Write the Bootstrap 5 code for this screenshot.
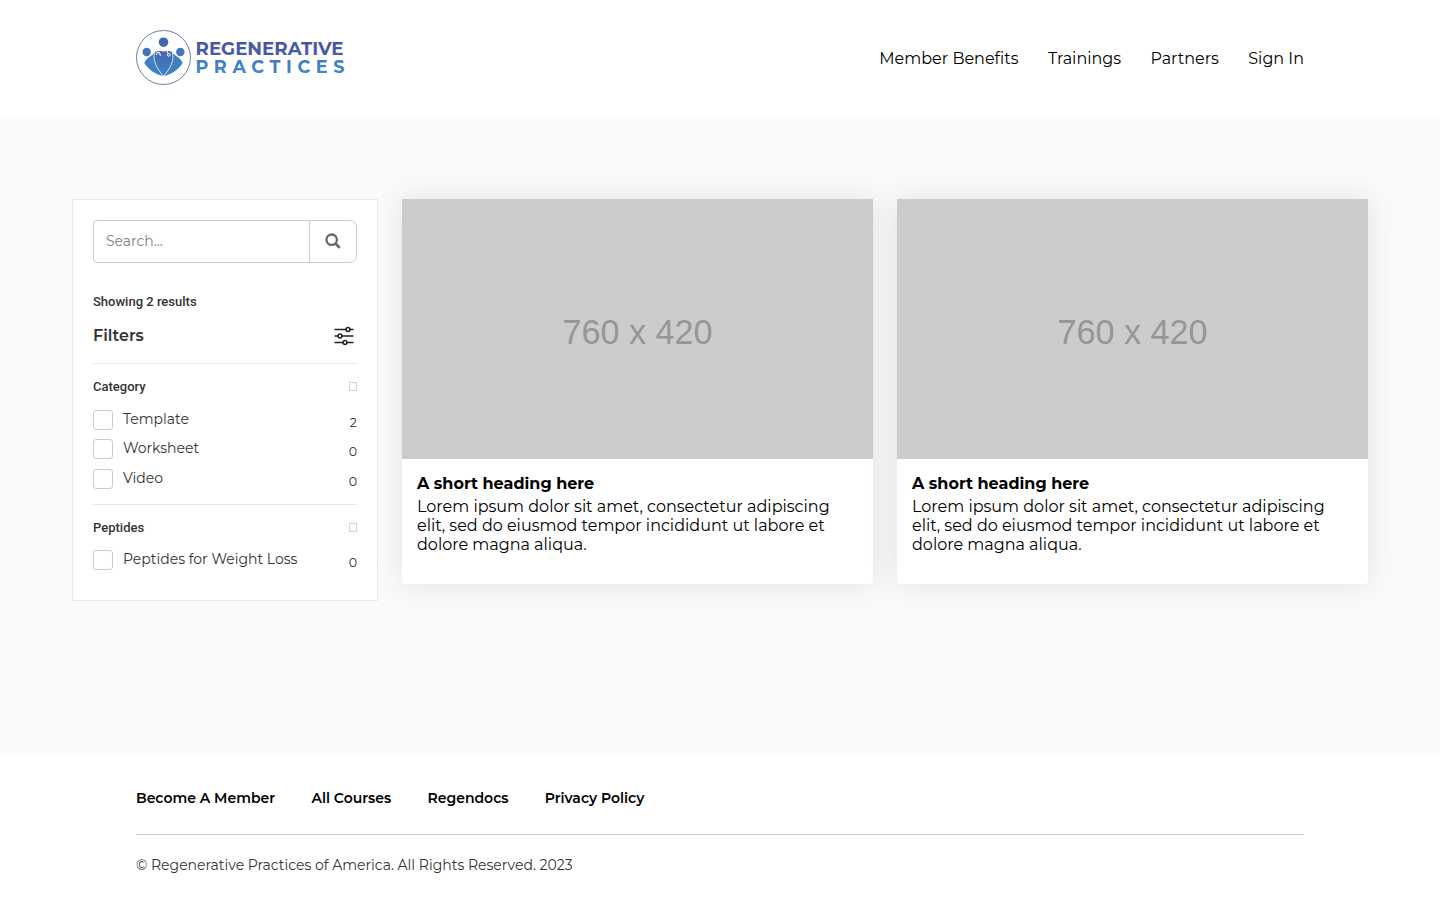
<!DOCTYPE html>
<html lang="en">
<head>
<meta charset="utf-8">
<meta name="viewport" content="width=device-width, initial-scale=1">
<title>Regenerative Practices</title>
<link href="https://cdn.jsdelivr.net/npm/bootstrap@5.3.0/dist/css/bootstrap.min.css" rel="stylesheet">
<script src="https://cdn.jsdelivr.net/npm/bootstrap@5.3.0/dist/js/bootstrap.bundle.min.js"></script>
<style>
  body { font-family: Montserrat, Inter, sans-serif; font-weight: 400; color: #000; background: #fff; }
  a { color: #000; text-decoration: none; white-space: nowrap; }
  .site-wrap { width: 1168px; max-width: 100%; margin: 0 auto; }

  .site-header { height: 119px; }
  .site-header .site-wrap { height: 115px; }
  .top-nav { gap: 29.3px; font-size: 16px; padding-top: 2px; }

  .page-main { height: 634px; padding-top: 80px; background: #fafafa; }

  .filter-panel { height: 402px; padding: 20px; background: #fff; border: 1px solid #e9e9e9; color: #333; }
  .search-box { height: 43px; margin-bottom: 30px; }
  .search-box .form-control { border: 1px solid #ccc; font-size: 14px; padding: 0 12px; border-radius: 4px 0 0 4px; }
  .search-box .form-control::placeholder { color: #7b8085; }
  .search-box .btn { width: 48px; border: 1px solid #ccc; border-radius: 0 7px 7px 0; padding: 0 0 2px; }
  .label-sm { font: 500 13px/17px Roboto, sans-serif; color: #333; }
  .filters-title { font-size: 16px; font-weight: 600; line-height: 24px; }
  .filters-head { height: 32px; margin: 10px 0 11px; padding-right: 3px; }
  .filter-rule { height: 1px; background: #e6e6e6; }
  .group-head { height: 17px; margin: 14px 0 15px; }
  .group-head.second-group { margin-bottom: 14px; }
  .glyph-box { width: 8px; height: 9px; border: 1px solid #d2d2d2; }
  .option-row { height: 20px; margin-bottom: 9.4px; font-size: 14px; line-height: 18px; }
  .option-row.last-option { margin-bottom: 15.2px; }
  .option-row .form-check-input { width: 20px; height: 20px; margin: 0 10px 0 0; border: 1px solid #ccc; border-radius: 3px; flex: none; }
  .option-count { font-size: 12.6px; padding-top: 4px; }

  .resource-card { height: 385px; background: #fff; border-radius: 4px; box-shadow: 0 0 30px rgba(0,0,0,.1); }
  .thumb { height: 260px; background: #ccc; color: #969696; font: 34.2px/1 "Liberation Sans", Arial, sans-serif; padding-top: 7px; }
  .card-text-wrap { padding: 15px 15px 0; }
  .card-text-wrap h2 { font-size: 16px; font-weight: 700; line-height: 19px; margin: 0 0 4px; }
  .card-text-wrap p { font-size: 16px; line-height: 19px; margin: 0; }

  .foot-nav { height: 81px; padding-top: 9px; font-size: 14px; font-weight: 600; gap: 36.3px; }
  .foot-line { border-top: 1px solid #ccc; }
  .copyright { font-size: 14px; line-height: 20px; padding-top: 20px; color: #333; }
</style>
</head>
<body>
<header class="site-header">
  <div class="site-wrap d-flex align-items-center justify-content-between">
    <a href="#" aria-label="Regenerative Practices">
      <svg class="d-block" width="212" height="56" viewBox="0 0 212 56">
        <defs>
          <linearGradient id="blue" x1="0" y1="0" x2="0" y2="1"><stop offset="0" stop-color="#4464ad"/><stop offset="1" stop-color="#3b86c8"/></linearGradient>
          <linearGradient id="word1" x1="0" y1="0" x2="0" y2="1"><stop offset="0" stop-color="#4a52a0"/><stop offset="1" stop-color="#465fab"/></linearGradient>
          <linearGradient id="word2" x1="0" y1="0" x2="0" y2="1"><stop offset="0" stop-color="#4275bb"/><stop offset="1" stop-color="#3f8fd0"/></linearGradient>
        </defs>
        <circle cx="27.5" cy="27.5" r="27" fill="#fff" stroke="#5b7191" stroke-width=".9"/>
        <circle cx="27.5" cy="12.2" r="4.8" fill="#4167b0"/>
        <circle cx="10.7" cy="22" r="4.2" fill="#3f75ba"/>
        <circle cx="44.3" cy="22" r="4.2" fill="#3f75ba"/>
        <path d="M19.500 21C16 27 11.500 26 8.300 33C12 39 19 44.500 27.500 46C36 44.500 43 39 46.700 33C43.500 26 39 27 35.500 21Z" fill="#3f7fc3"/>
        <path d="M18.500 23Q20.500 19 27.500 21.200Q34.500 19 36.500 23C38.500 30 34 39.500 27.500 46C21 39.500 16.500 30 18.500 23Z" fill="url(#blue)" stroke="#fff" stroke-width=".8"/>
        <path d="M20.500 25Q20.500 22.500 22.500 22Q24.300 23 24.300 26M31 21.300L31.800 23" fill="none" stroke="#fff" stroke-width="1.100"/>
        <circle cx="32.800" cy="24.800" r="1.400" fill="none" stroke="#fff" stroke-width="1"/>
        <g font-family="Montserrat, Inter, sans-serif" font-weight="700" font-size="17.600">
          <text x="59.500" y="24.800" textLength="148" lengthAdjust="spacingAndGlyphs" fill="url(#word1)">REGENERATIVE</text>
          <text x="59.500" y="43" textLength="149" fill="url(#word2)">PRACTICES</text>
        </g>
      </svg>
    </a>
    <nav class="top-nav d-flex">
      <a href="#">Member Benefits</a><a href="#">Trainings</a><a href="#">Partners</a><a href="#">Sign In</a>
    </nav>
  </div>
</header>

<main class="page-main">
  <div class="container">
    <div class="row">
      <aside class="col-3">
        <div class="filter-panel">
          <div class="search-box input-group">
            <input class="form-control" type="text" placeholder="Search..." aria-label="Search">
            <button class="btn d-flex align-items-center justify-content-center" type="button" aria-label="Search">
              <svg width="16" height="16" viewBox="0 0 16 16" fill="none" stroke="#666"><circle cx="6.700" cy="6.700" r="5.200" stroke-width="2.300"/><path d="M10.600 10.600L14.700 14.700" stroke-width="2.700"/></svg>
            </button>
          </div>
          <div class="label-sm">Showing 2 results</div>
          <div class="filters-head d-flex align-items-center justify-content-between">
            <span class="filters-title">Filters</span>
            <svg width="20" height="20" viewBox="0 0 20 20" fill="#fff" stroke="#222" stroke-width="1.500" stroke-linecap="round"><path d="M1 3.500H19M1 10H19M1 16.500H19"/><circle cx="14" cy="3.500" r="1.900"/><circle cx="6" cy="10" r="1.900"/><circle cx="11" cy="16.500" r="1.900"/></svg>
          </div>
          <div class="filter-rule"></div>
          <div class="group-head label-sm d-flex justify-content-between align-items-center"><span>Category</span><span class="glyph-box"></span></div>
          <div class="option-row d-flex"><input class="form-check-input" type="checkbox"><span>Template</span><span class="option-count ms-auto">2</span></div>
          <div class="option-row d-flex"><input class="form-check-input" type="checkbox"><span>Worksheet</span><span class="option-count ms-auto">0</span></div>
          <div class="option-row last-option d-flex"><input class="form-check-input" type="checkbox"><span>Video</span><span class="option-count ms-auto">0</span></div>
          <div class="filter-rule"></div>
          <div class="group-head second-group label-sm d-flex justify-content-between align-items-center"><span>Peptides</span><span class="glyph-box"></span></div>
          <div class="option-row d-flex"><input class="form-check-input" type="checkbox"><span>Peptides for Weight Loss</span><span class="option-count ms-auto">0</span></div>
        </div>
      </aside>
      <section class="col-9">
        <div class="row">
          <div class="col-6">
            <article class="resource-card">
              <div class="thumb d-flex align-items-center justify-content-center">760 x 420</div>
              <div class="card-text-wrap">
                <h2>A short heading here</h2>
                <p>Lorem ipsum dolor sit amet, consectetur adipiscing elit, sed do eiusmod tempor incididunt ut labore et dolore magna aliqua.</p>
              </div>
            </article>
          </div>
          <div class="col-6">
            <article class="resource-card">
              <div class="thumb d-flex align-items-center justify-content-center">760 x 420</div>
              <div class="card-text-wrap">
                <h2>A short heading here</h2>
                <p>Lorem ipsum dolor sit amet, consectetur adipiscing elit, sed do eiusmod tempor incididunt ut labore et dolore magna aliqua.</p>
              </div>
            </article>
          </div>
        </div>
      </section>
    </div>
  </div>
</main>

<footer>
  <div class="site-wrap">
    <nav class="foot-nav d-flex align-items-center">
      <a href="#">Become A Member</a><a href="#">All Courses</a><a href="#">Regendocs</a><a href="#">Privacy Policy</a>
    </nav>
    <div class="foot-line"></div>
    <div class="copyright">© Regenerative Practices of America. All Rights Reserved. 2023</div>
  </div>
</footer>
</body>
</html>
